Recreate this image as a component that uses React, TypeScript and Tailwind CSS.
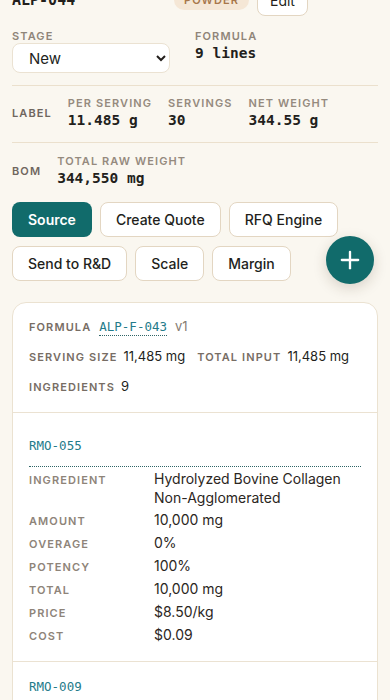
import { Plus } from "lucide-react";

const mono = "font-['DejaVu_Sans_Mono',monospace]";
const cap = "text-[11px] font-semibold uppercase tracking-[0.1em]";

type Line = { code: string; name: string; amount: string; overage: string; potency: string; total: string; price: string; cost: string };

const lines: Line[] = [
  {
    code: "RMO-055",
    name: "Hydrolyzed Bovine Collagen Non-Agglomerated",
    amount: "10,000 mg",
    overage: "0%",
    potency: "100%",
    total: "10,000 mg",
    price: "$8.50/kg",
    cost: "$0.09",
  },
  {
    code: "RMO-009",
    name: "Creatine Monohydrate",
    amount: "1,000 mg",
    overage: "0%",
    potency: "100%",
    total: "1,000 mg",
    price: "$12.00/kg",
    cost: "$0.01",
  },
];

function Stat({ label, value }: { label: string; value: string }) {
  return (
    <div className="flex flex-col">
      <span className={`${cap} leading-[13px] text-[#958a7e]`}>{label}</span>
      <span className={`${mono} text-[14.5px] font-semibold leading-[20px] text-[#231f1c]`}>{value}</span>
    </div>
  );
}

function LineItem({ line }: { line: Line }) {
  const rows: [string, string][] = [
    ["Ingredient", line.name],
    ["Amount", line.amount],
    ["Overage", line.overage],
    ["Potency", line.potency],
    ["Total", line.total],
    ["Price", line.price],
    ["Cost", line.cost],
  ];
  return (
    <div className="border-b border-[#ebe2d2] px-4 pt-4 pb-[15px] last:border-b-0">
      <div className={`${mono} border-b border-dotted border-[#2f6466] pb-[11px] text-[12.5px] leading-[18px] text-[#247b8a]`}>
        {line.code}
      </div>
      <div className="mt-[3px] grid grid-cols-[125px_1fr] items-baseline gap-y-[3.6px]">
        {rows.map(([k, v]) => (
          <div key={k} className="contents">
            <span className={`${cap} leading-[18.5px] text-[#8e8479]`}>{k}</span>
            <span className="text-[14px] leading-[18.5px] text-[#2b2622]">{v}</span>
          </div>
        ))}
      </div>
    </div>
  );
}

export default function App() {
  return (
    <div className="h-[700px] overflow-hidden bg-[#faf7f0] font-['Inter',sans-serif] text-[#231f1c]">
      <div className="-mt-[17px] px-3">
        {/* title row, scrolled mostly out of view */}
        <div className="flex h-[34px] items-center">
          <span className={`${mono} w-[162px] text-[15px] font-bold`}>ALP-044</span>
          <span className="flex h-5 items-center rounded-full bg-[#f5e7d6] px-2.5 text-[11px] font-semibold tracking-[0.1em] text-[#a7774b]">
            POWDER
          </span>
          <button type="button" className="ml-2 h-8 rounded-lg border border-[#e3d6c2] bg-white px-3 text-[14px]">
            Edit
          </button>
        </div>

        {/* stage + formula */}
        <div className="mt-[12px] flex gap-[25px] border-b border-[#ebe0cd] pb-3">
          <div className="flex w-[158px] flex-col">
            <span className={`${cap} leading-[14px] text-[#8f8579]`}>Stage</span>
            <select className="h-[30px] rounded-lg border border-[#ebe2d2] bg-white pl-3 pr-1 text-[15px] text-[#231f1c]">
              <option>New</option>
              <option>In Review</option>
              <option>Approved</option>
            </select>
          </div>
          <div className="flex flex-col">
            <span className={`${cap} leading-[14px] text-[#8f8579]`}>Formula</span>
            <span className={`${mono} text-[14.5px] font-semibold leading-[20px]`}>9 lines</span>
          </div>
        </div>

        {/* label */}
        <div className="flex items-center gap-4 border-b border-[#ebe0cd] pt-[11px] pb-3">
          <span className={`${cap} text-[#6f665e]`}>Label</span>
          <Stat label="Per serving" value="11.485 g" />
          <Stat label="Servings" value="30" />
          <Stat label="Net weight" value="344.55 g" />
        </div>

        {/* bom */}
        <div className="flex items-center gap-4 pt-[12px]">
          <span className={`${cap} text-[#6f665e]`}>BOM</span>
          <Stat label="Total raw weight" value="344,550 mg" />
        </div>

        {/* actions */}
        <div className="relative mt-[14px] flex flex-wrap gap-x-2 gap-y-[9px]">
          <button type="button" className="h-[35px] rounded-lg bg-[#116b6b] px-4 text-[14px] font-semibold text-white">
            Source
          </button>
          {["Create Quote", "RFQ Engine", "Send to R&D", "Scale", "Margin"].map((b) => (
            <button
              key={b}
              type="button"
              className="h-[35px] rounded-lg border border-[#e3d6c2] bg-white px-[15px] text-[14px] font-medium text-[#231f1c]"
            >
              {b}
            </button>
          ))}
          <button
            type="button"
            aria-label="Add"
            className="absolute top-[34px] right-1 flex size-12 items-center justify-center rounded-full bg-[#116b6b] text-white shadow-[0_4px_14px_rgba(60,45,20,0.18)]"
          >
            <Plus size={28} strokeWidth={2} />
          </button>
        </div>

        {/* formula card */}
        <div className="mt-[21px] rounded-[14px] border border-[#ebe2d1] bg-white">
          <div className="flex flex-col gap-[10px] border-b border-[#ebe2d2] px-4 pt-[14px] pb-[15px]">
            <div className="flex h-5 items-baseline gap-2">
              <span className={`${cap} text-[#776d64]`}>Formula</span>
              <span className={`${mono} border-b border-dotted border-[#2f6466] text-[12.5px] leading-[17px] text-[#247b8a]`}>
                ALP-F-043
              </span>
              <span className="text-[13px] text-[#857b72]">v1</span>
            </div>
            <div className="flex h-5 items-baseline">
              <span className={`${cap} text-[#776d64]`}>Serving size</span>
              <span className="ml-1.5 text-[13px] text-[#231f1c]">11,485 mg</span>
              <span className={`${cap} ml-3 text-[#776d64]`}>Total input</span>
              <span className="ml-1.5 text-[13px] text-[#231f1c]">11,485 mg</span>
            </div>
            <div className="flex h-5 items-baseline">
              <span className={`${cap} text-[#776d64]`}>Ingredients</span>
              <span className="ml-1.5 text-[13px] text-[#231f1c]">9</span>
            </div>
          </div>
          <div className="pt-2">
            {lines.map((l) => (
              <LineItem key={l.code} line={l} />
            ))}
          </div>
        </div>
      </div>
    </div>
  );
}
